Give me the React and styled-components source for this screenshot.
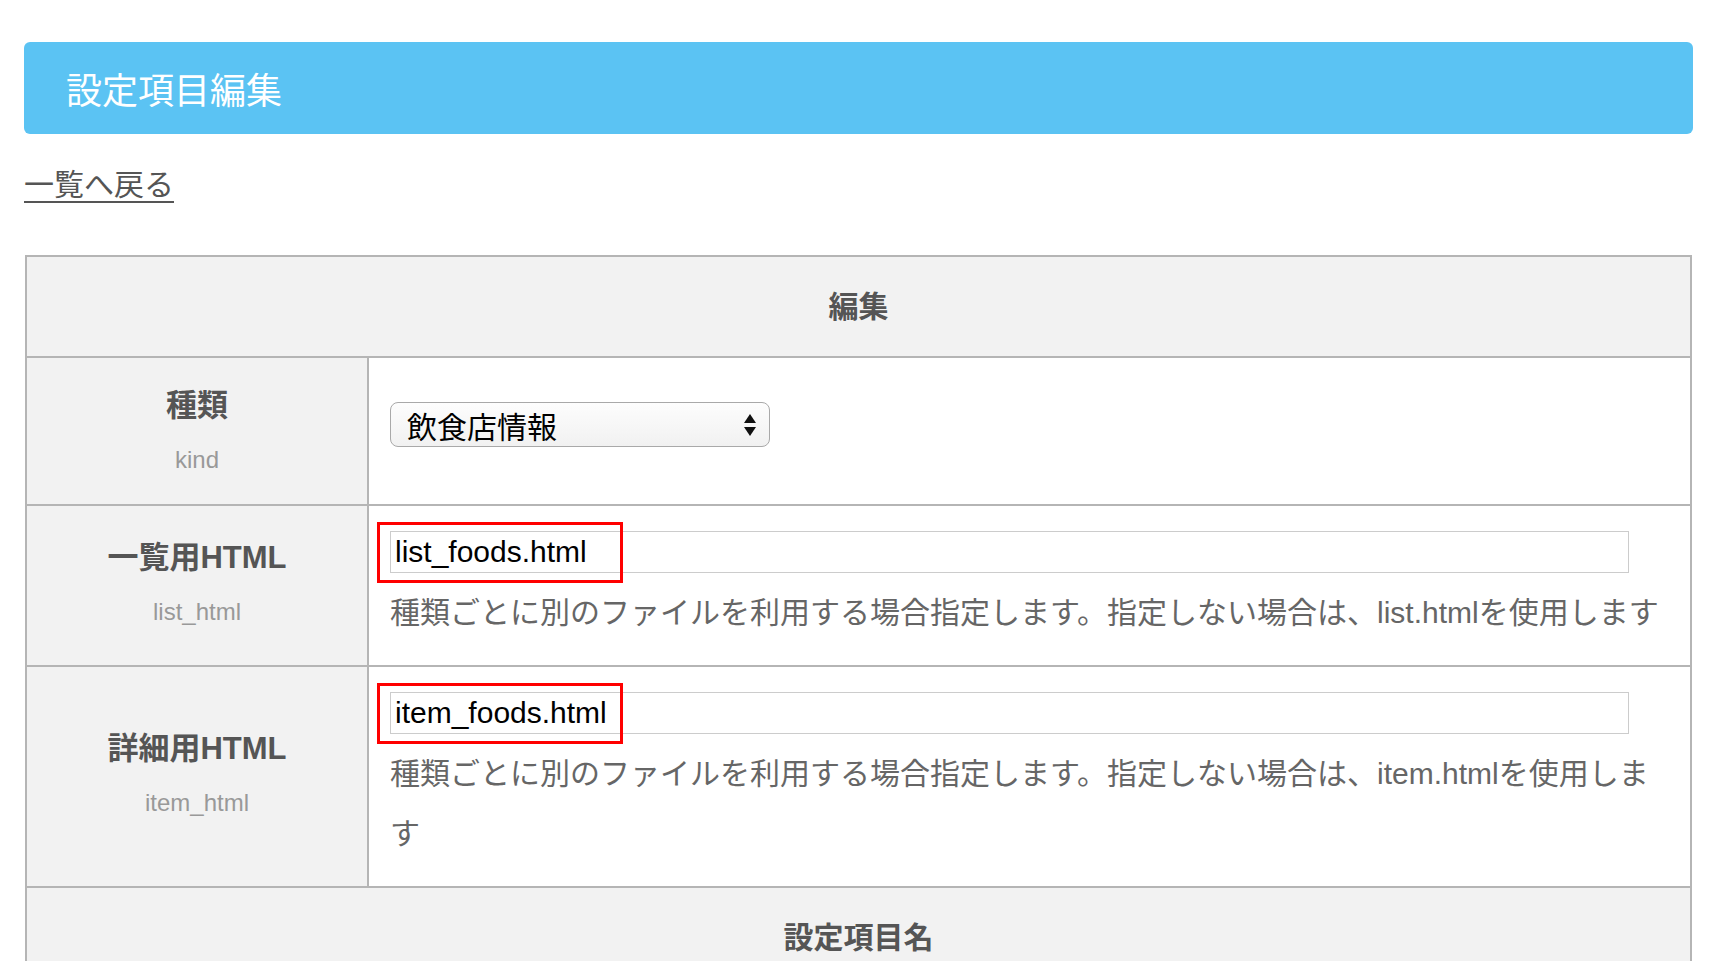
import React from "react";
import styled, { createGlobalStyle } from "styled-components";

const GlobalStyle = createGlobalStyle`
  html, body {
    margin: 0;
    padding: 0;
    background: #ffffff;
  }
  body {
    font-family: "Liberation Sans", "Noto Sans CJK JP", sans-serif;
    color: #555555;
  }
`;

const Page = styled.div`
  padding: 42px 28px 0 24px;
`;

const TitleBar = styled.h1`
  display: flex;
  align-items: center;
  height: 92px;
  margin: 0;
  padding: 0 42px;
  background: #5bc3f3;
  border-radius: 6px;
  color: #ffffff;
  font-size: 36px;
  font-weight: normal;
`;

const BackLink = styled.a`
  display: inline-block;
  margin-top: 28px;
  font-size: 30px;
  line-height: 45px;
  color: #555555;
  text-decoration: underline;
  text-underline-offset: 6px;
  text-decoration-thickness: 2px;
`;

const EditTable = styled.table`
  width: calc(100% - 2px);
  margin: 48px 0 0 1px;
  border-collapse: collapse;
  table-layout: fixed;
  td,
  th {
    border: 2px solid #b5b5b5;
  }
`;

const LabelCol = styled.col`
  width: 342px;
`;

const SectionHead = styled.th`
  padding: 27px 0;
  background: #f2f2f2;
  font-size: 30px;
  line-height: 45px;
  font-weight: 700;
  color: #555555;
  text-align: center;
`;

const LabelCell = styled.th`
  padding: ${(p) => (p.$first ? "22px 10px 16px" : "20px 10px")};
  background: #f2f2f2;
  text-align: center;
  vertical-align: middle;
  .name {
    font-size: 31px;
    line-height: 52px;
    font-weight: 700;
    color: #555555;
  }
  .key {
    font-size: 24px;
    line-height: 56px;
    font-weight: normal;
    color: #999999;
  }
`;

const ValueCell = styled.td`
  padding: 25px 21px 22px;
  background: #ffffff;
  vertical-align: middle;
`;

const SelectBox = styled.div`
  display: flex;
  align-items: center;
  justify-content: space-between;
  box-sizing: border-box;
  width: 380px;
  height: 45px;
  margin-bottom: 16px;
  padding: 0 12px 0 16px;
  border: 1px solid #a9a9a9;
  border-radius: 8px;
  background: linear-gradient(#fdfdfd, #f1f1f1);
  font-size: 30px;
  color: #000000;
`;

const InputWrap = styled.div`
  position: relative;
  width: calc(100% - 40px);
`;

const TextInput = styled.div`
  box-sizing: border-box;
  height: 42px;
  padding: 0 4px;
  border: 1px solid #cccccc;
  font-size: 30px;
  line-height: 40px;
  color: #000000;
`;

const Marker = styled.div`
  position: absolute;
  left: -13px;
  top: -9px;
  box-sizing: border-box;
  width: 246px;
  height: 61px;
  border: 3px solid #ff0000;
`;

const Help = styled.p`
  margin: 10px 0 0;
  font-size: 30px;
  line-height: 60px;
  color: #666666;
`;

const Arrows = () => (
  <svg width="14" height="24" viewBox="0 0 14 24">
    <path d="M7 1 L13 10 L1 10 Z" fill="#111" />
    <path d="M7 23 L13 14 L1 14 Z" fill="#111" />
  </svg>
);

const fields = [
  {
    name: "一覧用HTML",
    key: "list_html",
    value: "list_foods.html",
    help: "種類ごとに別のファイルを利用する場合指定します。指定しない場合は、list.htmlを使用します",
  },
  {
    name: "詳細用HTML",
    key: "item_html",
    value: "item_foods.html",
    help: "種類ごとに別のファイルを利用する場合指定します。指定しない場合は、item.htmlを使用します",
  },
];

const App = () => {
  return (
    <Page>
      <GlobalStyle />
      <TitleBar>設定項目編集</TitleBar>
      <BackLink href="#">一覧へ戻る</BackLink>
      <EditTable>
        <colgroup>
          <LabelCol />
          <col />
        </colgroup>
        <tbody>
          <tr>
            <SectionHead colSpan={2}>編集</SectionHead>
          </tr>
          <tr>
            <LabelCell $first>
              <div className="name">種類</div>
              <div className="key">kind</div>
            </LabelCell>
            <ValueCell>
              <SelectBox>
                <span>飲食店情報</span>
                <Arrows />
              </SelectBox>
            </ValueCell>
          </tr>
          {fields.map((f) => (
            <tr key={f.key}>
              <LabelCell>
                <div className="name">{f.name}</div>
                <div className="key">{f.key}</div>
              </LabelCell>
              <ValueCell>
                <InputWrap>
                  <TextInput>{f.value}</TextInput>
                  <Marker />
                </InputWrap>
                <Help>{f.help}</Help>
              </ValueCell>
            </tr>
          ))}
          <tr>
            <SectionHead colSpan={2}>設定項目名</SectionHead>
          </tr>
        </tbody>
      </EditTable>
    </Page>
  );
};

export default App;
